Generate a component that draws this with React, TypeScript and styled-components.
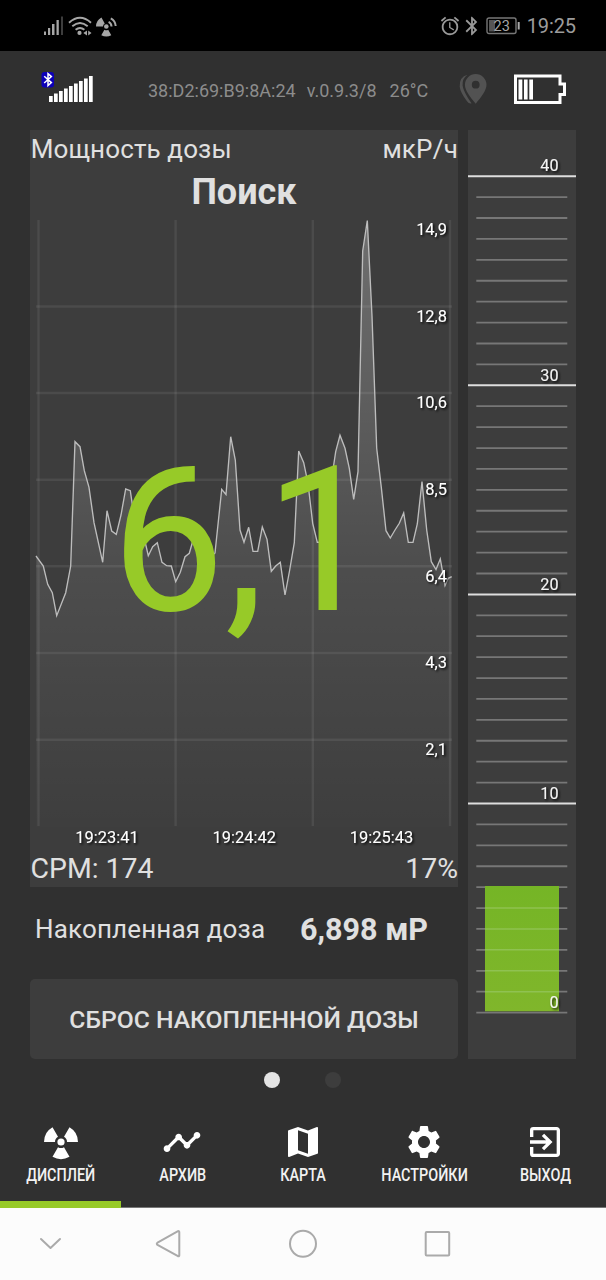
import React from 'react';
import styled, { createGlobalStyle } from 'styled-components';
import { MdAlarm, MdBluetooth, MdExitToApp, MdMap, MdSettings, MdTimeline } from 'react-icons/md';

const GlobalStyle = createGlobalStyle`
  * { box-sizing: border-box; }
  body { margin: 0; background: #303030; font-family: Roboto, "Liberation Sans", sans-serif; }
`;

const Screen = styled.div`
  width: 606px;
  height: 1280px;
  display: flex;
  flex-direction: column;
  background: #303030;
  color: #e0e0e0;
  overflow: hidden;
`;

const Row = styled.div`
  display: flex;
  align-items: center;
`;

const StatusBar = styled(Row)`
  height: 51px;
  flex: none;
  justify-content: space-between;
  padding: 0 30px 0 43px;
  background: #000;
  color: #999;
`;

const StatusGroup = styled(Row)`
  height: 51px;
`;

const Clock = styled.span`
  font-size: 20px;
  line-height: 24px;
  margin-left: 5px;
  letter-spacing: -0.1px;
  color: #9c9c9c;
`;

const DeviceBar = styled(Row)`
  height: 79px;
  flex: none;
  padding: 0 39px 0 41px;
`;

const DeviceInfo = styled.div`
  display: flex;
  gap: 11px;
  margin-left: 55px;
  width: 311px;
  font-size: 18px;
  line-height: 22px;
  color: #8c8c8c;
  white-space: nowrap;
`;

const Lifted = styled(Row)<{ $by: number; $left?: number }>`
  margin-left: ${(p) => p.$left ?? 0}px;
  padding-bottom: ${(p) => p.$by}px;
`;

const InfoItem = styled.span<{ $spacing?: number; $indent?: number }>`
  letter-spacing: ${(p) => p.$spacing ?? 0}px;
  padding-left: ${(p) => p.$indent ?? 0}px;
`;

const Content = styled.main`
  display: flex;
  flex: none;
  gap: 10px;
  height: 929px;
  padding: 0 30px;
`;

const Column = styled.div`
  width: 428px;
  display: flex;
  flex-direction: column;
`;

const DosePanel = styled.section`
  position: relative;
  height: 757px;
  display: flex;
  flex-direction: column;
  background: #3d3d3d;
`;

const PanelRow = styled.div<{ $height: number; $size: number }>`
  display: flex;
  justify-content: space-between;
  height: ${(p) => p.$height}px;
  line-height: ${(p) => p.$height}px;
  font-size: ${(p) => p.$size}px;
  white-space: nowrap;
`;

const Mode = styled.h1`
  margin: 0;
  height: 46px;
  line-height: 48px;
  font-size: 36px;
  font-weight: 700;
  text-align: center;
`;

const Plot = styled.svg`
  display: block;
  flex: none;
`;

const Reading = styled.div`
  position: absolute;
  left: 81px;
  top: 291px;
  font-size: 202.5px;
  line-height: 240px;
  color: #97ca28;
  white-space: nowrap;
`;

const Total = styled(Row)`
  height: 92px;
  padding: 0 30px 8px 5px;
  justify-content: space-between;
  white-space: nowrap;
`;

const TotalLabel = styled.span`
  font-size: 26px;
  letter-spacing: 0.15px;
`;

const TotalValue = styled.strong`
  font-size: 30.5px;
  font-weight: 700;
`;

const ResetButton = styled.button`
  height: 80px;
  padding: 0;
  border: 0;
  border-radius: 5px;
  background: #3d3d3d;
  color: #e0e0e0;
  font: 500 24.7px Roboto, "Liberation Sans", sans-serif;
  white-space: nowrap;
`;

const Gauge = styled.section`
  width: 108px;
  height: 929px;
  background: #3d3d3d;
`;

const Pager = styled.div`
  display: flex;
  align-items: center;
  justify-content: center;
  flex: none;
  gap: 45px;
  height: 42px;
  padding: 0 1px 1px 0;
`;

const Dot = styled.i<{ $active?: boolean }>`
  width: 16px;
  height: 16px;
  border-radius: 50%;
  background: ${(p) => (p.$active ? '#e4e4e4' : '#3d3d3d')};
`;

const Tabs = styled.nav`
  display: flex;
  flex: none;
  height: 107px;
`;

const Tab = styled.div<{ $active?: boolean }>`
  flex: 1;
  display: flex;
  flex-direction: column;
  align-items: center;
  padding-top: 21px;
  color: #fff;
  border-bottom: ${(p) => (p.$active ? '7px solid #97ca28' : '1px solid #777')};
`;

const TabLabel = styled.span`
  margin-top: 3px;
  font-size: 18px;
  font-weight: 500;
  line-height: 20px;
  white-space: nowrap;
  color: #f2f2f2;
  transform: translateX(0.5px) scaleX(0.8);
`;

const SystemNav = styled(Row)`
  flex: none;
  height: 72px;
  background: #fcfcfc;
`;

const trace: [number, number][] = [
  [36, 556], [43.3, 566], [47.7, 584.3], [52.3, 592.7], [56.7, 615.7], [65.7, 592.7], [70.7, 566], [75, 441.7],
  [80, 446.7], [84.3, 470.7], [89, 487.3], [94, 522.7], [102.7, 562.3], [107, 510.7], [111.7, 531], [116.3, 534.3],
  [121, 515], [125.7, 489], [130.3, 490.7], [135, 523], [144, 537], [148.3, 555.7], [152.7, 546.7], [157.3, 542.7],
  [162, 562.3], [166.7, 565.7], [171.3, 566], [175.7, 581.7], [180.3, 572.3], [185, 556.7], [189.3, 553.3],
  [194, 536.7], [200, 545], [208, 560], [215, 553], [221.7, 489.3], [226, 494.5], [230.7, 436.7], [235.3, 460],
  [240, 530], [244, 542.3], [248.7, 527.3], [253, 551.3], [257.7, 551.3], [262.3, 527], [267, 539.3], [271.3, 571.3],
  [275.7, 566], [280.3, 562.3], [285, 595], [289.7, 570], [294.3, 542.7], [298.7, 451], [303.7, 462.7], [308, 483.3],
  [312.7, 523.3], [317.3, 542.3], [322, 542], [328, 500], [333.7, 465], [335.7, 451.7], [340, 435.3], [345, 448.3],
  [349.3, 468.3], [353.7, 499.3], [358, 471.7], [362.7, 251], [367.3, 220.5], [372, 316], [376.7, 448.3],
  [381.3, 487.3], [386, 530.7], [390.3, 538], [395, 530], [399.3, 523.3], [403.7, 513], [408.3, 542.3], [413, 542.3],
  [417.3, 524], [422, 481.5], [426.7, 530], [431.3, 561.7], [436, 569.5], [440.3, 559], [445, 585.5], [448.3, 578.3],
  [451.7, 576.7],
];

const levels = ['14,9', '12,8', '10,6', '8,5', '6,4', '4,3', '2,1'];
const times = ['19:23:41', '19:24:42', '19:25:43'];

function Chart() {
  const line = trace.map((p) => p.join(',')).join(' ');
  return (
    <Plot width="428" height="636" viewBox="30 214 428 636" fontFamily="Roboto, sans-serif">
      <defs>
        <linearGradient id="fill" gradientUnits="userSpaceOnUse" x1="0" y1="220" x2="0" y2="827">
          <stop offset="0" stopColor="#fff" stopOpacity="0.26" />
          <stop offset="0.57" stopColor="#fff" stopOpacity="0.085" />
          <stop offset="1" stopColor="#fff" stopOpacity="0.005" />
        </linearGradient>
        <filter id="shade" x="-20%" y="-20%" width="140%" height="160%">
          <feDropShadow dx="1.5" dy="1.5" stdDeviation="1" floodColor="#000" floodOpacity="0.95" />
        </filter>
      </defs>
      <polygon points={`36,827 ${line} 452,827`} fill="url(#fill)" />
      <g stroke="#fff" strokeOpacity="0.075" strokeWidth="2.4">
        {[38.5, 175.6, 312.8, 450].map((x) => <path key={x} d={`M${x} 220V826`} />)}
        {[306.5, 393, 479.7, 566.2, 653, 739.7].map((y) => <path key={y} d={`M36 ${y}H452`} />)}
      </g>
      <polyline points={line} fill="none" stroke="#bdbdbd" strokeWidth="1.35" />
      <g fill="#fff" fontSize="16.4" filter="url(#shade)">
        {levels.map((v, i) => (
          <text key={v} x="447" y={235.2 + i * 86.6} textAnchor="end">{v}</text>
        ))}
        {times.map((v, i) => (
          <text key={v} x={107 + i * 137.2} y="843" textAnchor="middle" textLength="63.5">{v}</text>
        ))}
      </g>
    </Plot>
  );
}

function GaugeScale() {
  const ticks = Array.from({ length: 41 }, (_, i) => i);
  return (
    <svg width="108" height="929" viewBox="468 130 108 929" fontFamily="Roboto, sans-serif">
      <defs>
        <linearGradient id="bar" x1="0" y1="0" x2="0" y2="1">
          <stop offset="0" stopColor="#75b526" />
          <stop offset="1" stopColor="#80b62b" />
        </linearGradient>
        <filter id="numShade" x="-20%" y="-20%" width="160%" height="160%">
          <feDropShadow dx="1.5" dy="1.5" stdDeviation="1" floodColor="#000" floodOpacity="0.9" />
        </filter>
      </defs>
      {ticks.map((n) => {
        const y = 1012.6 - n * 20.91;
        const major = n > 0 && n % 10 === 0;
        return (
          <path key={n} d={major ? `M468 ${y}H576` : `M476.3 ${y}H567.3`}
            stroke={major ? '#dedede' : '#777'} strokeWidth={major ? 2 : 1.8} />
        );
      })}
      <rect x="485" y="886" width="74" height="125.3" fill="url(#bar)" />
      {[1, 2, 3, 4, 5].map((n) => (
        <path key={n} d={`M485 ${1012.6 - n * 20.91}H559`} stroke="#8fc251" strokeWidth="1.5" />
      ))}
      <g fill="#f4f4f4" fontSize="16.2" filter="url(#numShade)">
        {[0, 10, 20, 30, 40].map((n) => (
          <text key={n} x="558.5" y={1007.8 - n * 20.91} textAnchor="end">{n}</text>
        ))}
      </g>
    </svg>
  );
}

function blade(from: number, to: number, inner: number, outer: number) {
  const at = (deg: number, r: number) =>
    `${(Math.cos((deg * Math.PI) / 180) * r).toFixed(2)} ${(Math.sin((deg * Math.PI) / 180) * r).toFixed(2)}`;
  return `M${at(from, inner)}L${at(from, outer)}A${outer} ${outer} 0 0 1 ${at(to, outer)}L${at(to, inner)}A${inner} ${inner} 0 0 0 ${at(from, inner)}Z`;
}

const RadiationIcon = () => (
  <svg width="40" height="40" viewBox="-20 -20 40 40" fill="currentColor">
    <circle r="3.6" />
    {[60, 180, 300].map((a) => <path key={a} d={blade(a, a + 60, 6, 17)} />)}
  </svg>
);

const StatusIcons = () => (
  <svg width="80" height="30" viewBox="43 10.5 80 30" fill="#a6a6a6">
    <path d="M44 31h2v3.5h-2zM48 27.5h2.2v7H48zM52 23.5h2.5v11H52zM56.5 19.5h2.3v15h-2.3z" />
    <path d="M61 16h2v18.5h-2z" fill="#3d3d3d" />
    <g fill="none" stroke="#a6a6a6" strokeWidth="1.9">
      <path d="M69 22.2q11-9.8 22 0M72.3 25.8q7.7-6.6 15.4 0M75.6 29.3q4.4-3.6 8.8 0" />
    </g>
    <circle cx="79.5" cy="32.4" r="2.1" />
    <path d="M87 30v5l-3.7-2.5zM88.2 30v5l3.3-2.5z" />
    <g transform="translate(106.3 26)">
      <circle r="2.3" />
      <path d={blade(180, 242, 3.3, 10.3)} />
      <path d={blade(60, 120, 3.8, 10)} />
      <path d="M2.3-4.6A5.2 5.2 0 0 1 5.2 0M4.5-8.2A9.5 9.5 0 0 1 9.4-.5" fill="none" stroke="#a6a6a6" strokeWidth="2" />
    </g>
  </svg>
);

const StatusBattery = () => (
  <svg width="39" height="18" viewBox="-3 0 39 18">
    <rect x="1" y="1" width="29" height="15.5" rx="2" fill="none" stroke="#777" strokeWidth="1.4" />
    <rect x="3" y="3" width="6" height="11.5" fill="#555" />
    <path d="M32.7 5v7.5" stroke="#aaa" strokeWidth="2" />
    <text x="15.7" y="14" fontSize="14.5" fill="#a6a6a6" textAnchor="middle" fontFamily="Roboto, sans-serif">23</text>
  </svg>
);

const SensorSignal = () => (
  <svg width="52" height="32" viewBox="41 71 52 32">
    <rect x="41.5" y="72" width="12.5" height="15.5" rx="3" fill="#0d00b8" />
    <path d="M44.2 76.2l7.2 6.4-3.4 3v-12l3.4 3-7.2 6.4" fill="none" stroke="#fff" strokeWidth="1.5" />
    {Array.from({ length: 9 }, (_, i) => (
      <rect key={i} x={49 + i * 5} y={96 - i * 2.5} width="3.7" height={6 + i * 2.5} fill="#fff" />
    ))}
  </svg>
);

const PinIcon = () => (
  <svg width="28" height="32" viewBox="459 73 28 32" fill="#525252">
    <path fillRule="evenodd" d="M475.7 74a10.8 10.8 0 0 1 10.8 10.8c0 6-5.6 12.5-10.8 19-5.2-6.5-10.8-13-10.8-19A10.8 10.8 0 0 1 475.7 74zm0 6.8a3.9 3.9 0 1 0 0 7.8 3.9 3.9 0 0 0 0-7.8z" />
    <path d="M467.5 74.7q-5.5 4-4.9 11 1 6.5 8.9 17.500-2.400.800-4.500-2-6.700-9-7.300-14.500-.500-10 7.800-12z" />
  </svg>
);

const SensorBattery = () => (
  <svg width="53" height="31" viewBox="514 73.5 53 31">
    <path d="M515.5 75.5h44.500v8h4.500v10.500h-4.500v8h-44.500z" fill="none" stroke="#fff" strokeWidth="3" />
    <path d="M518.5 79h3.800v20h-3.800zM524 79h3.600v20H524zM529.300 79h3.700v20h-3.700z" fill="#fff" />
  </svg>
);

const NavKeys = () => (
  <svg width="606" height="72" viewBox="0 1208 606 72" fill="none" stroke="#aaa" strokeWidth="2" strokeLinejoin="round" strokeLinecap="round">
    <path d="M41 1239l9.5 9 9.5-9" />
    <path d="M178 1231.2q1.3-.5 1.3 1v23q0 1.5-1.3 1l-20.5-11.300q-1.400-1.200 0-2.200z" />
    <circle cx="303" cy="1243.8" r="13" />
    <rect x="425.7" y="1232" width="23.5" height="23.5" rx="1" />
  </svg>
);

export default function App() {
  return (
    <Screen>
      <GlobalStyle />
      <StatusBar>
        <StatusGroup><StatusIcons /></StatusGroup>
        <StatusGroup>
          <MdAlarm size={22} />
          <MdBluetooth size={22} />
          <StatusBattery />
          <Clock>19:25</Clock>
        </StatusGroup>
      </StatusBar>
      <DeviceBar>
        <Lifted $by={7}><SensorSignal /></Lifted>
        <DeviceInfo>
          <InfoItem>38:D2:69:B9:8A:24</InfoItem>
          <InfoItem>v.0.9.3/8</InfoItem>
          <InfoItem $indent={2}>26°C</InfoItem>
        </DeviceInfo>
        <Lifted $by={3}><PinIcon /></Lifted>
        <Lifted $by={2} $left={27}><SensorBattery /></Lifted>
      </DeviceBar>
      <Content>
        <Column>
          <DosePanel>
            <PanelRow $height={38} $size={26}>
              <InfoItem $spacing={0.12} $indent={0.7}>Мощность дозы</InfoItem>
              <InfoItem $spacing={0.2}>мкР/ч</InfoItem>
            </PanelRow>
            <Mode>Поиск</Mode>
            <Chart />
            <PanelRow $height={38} $size={28.4}>
              <InfoItem $indent={0.5}>CPM: 174</InfoItem>
              <InfoItem>17%</InfoItem>
            </PanelRow>
            <Reading>6,1</Reading>
          </DosePanel>
          <Total>
            <TotalLabel>Накопленная доза</TotalLabel>
            <TotalValue>6,898 мР</TotalValue>
          </Total>
          <ResetButton>СБРОС НАКОПЛЕННОЙ ДОЗЫ</ResetButton>
        </Column>
        <Gauge><GaugeScale /></Gauge>
      </Content>
      <Pager><Dot $active /><Dot /></Pager>
      <Tabs>
        <Tab $active><RadiationIcon /><TabLabel>ДИСПЛЕЙ</TabLabel></Tab>
        <Tab><MdTimeline size={40} /><TabLabel>АРХИВ</TabLabel></Tab>
        <Tab><MdMap size={40} /><TabLabel>КАРТА</TabLabel></Tab>
        <Tab><MdSettings size={40} /><TabLabel>НАСТРОЙКИ</TabLabel></Tab>
        <Tab><MdExitToApp size={40} /><TabLabel>ВЫХОД</TabLabel></Tab>
      </Tabs>
      <SystemNav><NavKeys /></SystemNav>
    </Screen>
  );
}
